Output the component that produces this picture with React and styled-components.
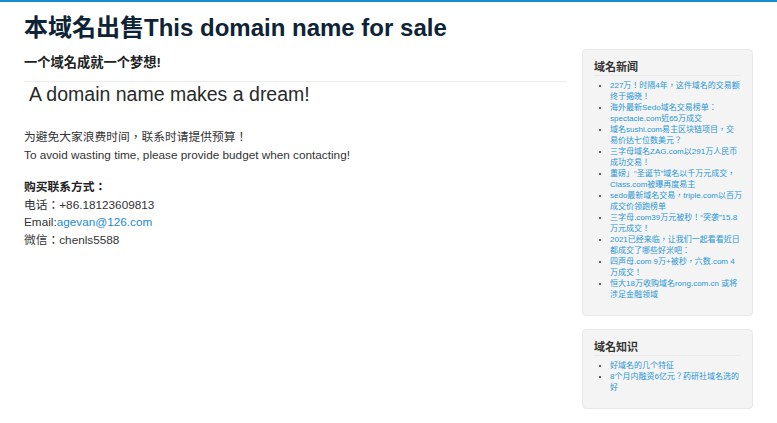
import React from "react";
import styled, { createGlobalStyle } from "styled-components";

const Global = createGlobalStyle`
  html, body { margin: 0; padding: 0; background: #fff; }
  body {
    border-top: 2px solid #168bd3;
    font-family: "Liberation Sans", Arial, "Noto Sans CJK TC", "Noto Sans CJK SC", sans-serif;
    color: #333;
  }
`;

const Layout = styled.div`
  display: flex;
  align-items: flex-start;
  gap: 16px;
  padding: 0 24px 0 24px;
`;

const Main = styled.main`
  flex: 1;
  min-width: 0;
`;

const Title = styled.h1`
  margin: 0;
  padding-top: 11px;
  font-size: 24px;
  line-height: 30px;
  font-weight: 700;
  color: #0e2335;
`;

const Subtitle = styled.h3`
  margin: 10px 0 0;
  font-size: 13.25px;
  line-height: 20px;
  font-weight: 700;
  color: #222;
`;

const Divider = styled.hr`
  margin: 8px 0 0;
  border: 0;
  border-top: 1px solid #ececec;
  height: 0;
`;

const Slogan = styled.h2`
  margin: 0;
  padding-left: 5px;
  font-size: 19.5px;
  line-height: 24px;
  font-weight: 400;
  color: #2a2a2a;
`;

const Para = styled.p`
  margin: ${(p) => p.$top}px 0 0;
  font-size: 11.75px;
  line-height: ${(p) => p.$lh}px;
  color: #333;
`;

const Strong = styled.strong`
  font-weight: 700;
  color: #222;
`;

const Mail = styled.a`
  color: #1d8ad2;
  text-decoration: none;
`;

const Sidebar = styled.aside`
  width: 171px;
  flex: none;
  margin-top: 47px;
  display: flex;
  flex-direction: column;
  gap: 13px;
`;

const Box = styled.section`
  background: #f4f4f4;
  border: 1px solid #e8e8e8;
  border-radius: 4px;
  padding: 9px 11px 15px;
`;

const BoxTitle = styled.h4`
  margin: 0;
  font-size: 11px;
  line-height: 16px;
  font-weight: 700;
  color: #333;
  border-bottom: 1px solid #ebebeb;
`;

const List = styled.ul`
  margin: 4px 0 0;
  padding-left: 16px;
  list-style: disc;
  font-size: 8px;
  line-height: 11px;
  color: #333;
`;

const Item = styled.li`
  margin: 0;
`;

const Link = styled.a`
  color: #2897d6;
  text-decoration: none;
`;

const Line = styled.span`
  display: block;
  white-space: nowrap;
`;

const news = [
  ["227万！时隔4年，这件域名的交易额", "终于揭晓！"],
  ["海外最新Sedo域名交易榜单：", "spectacle.com近65万成交"],
  ["域名sushi.com易主区块链项目，交", "易价达七位数美元？"],
  ["三字母域名ZAG.com以291万人民币", "成功交易！"],
  ["重磅」“圣诞节”域名以千万元成交，", "Class.com被曝再度易主"],
  ["sedo最新域名交易，triple.com以百万", "成交价领跑榜单"],
  ["三字母.com39万元被秒！“突袭”15.8", "万元成交！"],
  ["2021已经来临，让我们一起看看近日", "都成交了哪些好米吧："],
  ["四声母.com 9万+被秒，六数.com 4", "万成交！"],
  ["恒大18万收购域名rong.com.cn 或将", "涉足金融领域"],
];

const knowledge = [
  ["好域名的几个特征"],
  ["8个月内融资6亿元？药研社域名选的", "好"],
];

function SideBox({ title, items }) {
  return (
    <Box>
      <BoxTitle>{title}</BoxTitle>
      <List>
        {items.map((lines, i) => (
          <Item key={i}>
            <Link href="#">
              {lines.map((l, j) => (
                <Line key={j}>{l}</Line>
              ))}
            </Link>
          </Item>
        ))}
      </List>
    </Box>
  );
}

export default function App() {
  return (
    <>
      <Global />
      <Layout>
        <Main>
          <Title>本域名出售This domain name for sale</Title>
          <Subtitle>一个域名成就一个梦想!</Subtitle>
          <Divider />
          <Slogan>A domain name makes a dream!</Slogan>
          <Para $top={22} $lh={18}>
            为避免大家浪费时间，联系时请提供预算！
            <br />
            To avoid wasting time, please provide budget when contacting!
          </Para>
          <Para $top={14} $lh={17.5}>
            <Strong>购买联系方式：</Strong>
            <br />
            电话：+86.18123609813
            <br />
            Email:<Mail href="#">agevan@126.com</Mail>
            <br />
            微信：chenls5588
          </Para>
        </Main>
        <Sidebar>
          <SideBox title="域名新闻" items={news} />
          <SideBox title="域名知识" items={knowledge} />
        </Sidebar>
      </Layout>
    </>
  );
}
